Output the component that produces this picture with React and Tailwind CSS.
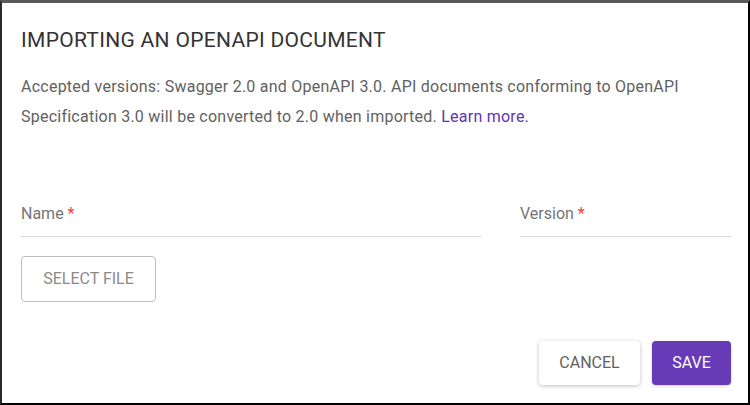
import React from 'react';

function App() {
  return (
    <div className="w-[750px] h-[405px] bg-white border-t-[3px] border-t-[#595959] border-l-2 border-l-[#2a2a2a] border-r-2 border-r-black border-b-2 border-b-black font-['Roboto',sans-serif] flex flex-col">
      <div className="pl-[19px] pr-[17px] pt-[25px]">
        <h2 className="text-[21px] leading-[24px] tracking-[0.3px] text-[#333333]">IMPORTING AN OPENAPI DOCUMENT</h2>
        <p className="mt-[20px] pr-[2px] text-[16px] leading-[30px] tracking-[0.24px] text-[#616161]">
          Accepted versions: Swagger 2.0 and OpenAPI 3.0. API documents conforming to OpenAPI Specification 3.0 will be converted to 2.0 when imported.{" "}
          <a href="#" className="text-[#5e35b1]">Learn more.</a>
        </p>

        {/* Fields */}
        <div className="mt-[70px] flex gap-[38px]">
          <div className="w-[461px] shrink-0 border-b border-[#d9d9d9] pb-[10px]">
            <label className="text-[16px] leading-[20px] text-[#757575]">
              Name <span className="text-[#f44336]">*</span>
            </label>
          </div>
          <div className="w-[211px] shrink-0 border-b border-[#d9d9d9] pb-[10px]">
            <label className="text-[16px] leading-[20px] text-[#757575]">
              Version <span className="text-[#f44336]">*</span>
            </label>
          </div>
        </div>

        <button className="mt-[19px] w-[135px] h-[46px] border border-[#bdbdbd] rounded-[4px] text-[16px] text-[#8a8a8a]">
          SELECT FILE
        </button>
      </div>

      {/* Actions */}
      <div className="mt-auto flex justify-end gap-[12px] pr-[17px] pb-[18px]">
        <button className="w-[101px] h-[44px] bg-white rounded-[4px] shadow-[0_1px_4px_rgba(0,0,0,0.25)] text-[16px] text-[#616161]">
          CANCEL
        </button>
        <button className="w-[79px] h-[44px] bg-[#673ab7] rounded-[4px] shadow-[0_1px_3px_rgba(0,0,0,0.2)] text-[16px] text-white">
          SAVE
        </button>
      </div>
    </div>
  );
}

export default App;
